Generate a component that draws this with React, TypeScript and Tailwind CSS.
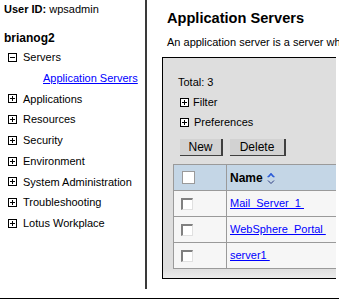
import React from "react";

const Box = ({ minus }: { minus?: boolean }) => (
  <svg width="9" height="9" viewBox="0 0 9 9" className="shrink-0">
    <rect x="0.5" y="0.5" width="8" height="8" fill="white" stroke="#000" />
    <path d="M2 4.5H7" stroke="#000" />
    {!minus && <path d="M4.5 2V7" stroke="#000" />}
  </svg>
);

const Check = () => (
  <div className="w-[12px] h-[12px] bg-white border-t-2 border-l-2 border-[#808080] border-r border-b border-r-[#e0e0e0] border-b-[#e0e0e0]" />
);

const SortIcon = () => (
  <svg width="8" height="14" viewBox="0 0 8 14" className="shrink-0">
    <path d="M0.5 6 L4 2 L7.5 6 L6 6 L4 3.8 L2 6 Z" fill="#2a5ad8" stroke="#2a5ad8" strokeWidth="0.6" />
    <path d="M1 9.5 L4 12.5 L7 9.5" fill="none" stroke="#2b3a80" strokeWidth="1" />
  </svg>
);

const navItems = [
  "Applications",
  "Resources",
  "Security",
  "Environment",
  "System Administration",
  "Troubleshooting",
  "Lotus Workplace",
];

const rows = ["Mail_Server_1", "WebSphere_Portal", "server1"];

export default function App() {
  return (
    <div className="w-[339px] h-[299px] bg-white overflow-hidden border-b border-black font-['Liberation_Sans',Arial,sans-serif] text-black">
      <div className="flex h-[290px]">
        {/* Left nav */}
        <div className="w-[145px] shrink-0 text-[11px]">
          <div className="pl-[4px] leading-[18px] whitespace-nowrap">
            <span className="font-bold">User ID:</span> wpsadmin
          </div>
          <div className="pl-[4px] mt-[11px] leading-[18px] font-bold text-[12px]">brianog2</div>
          <div className="flex items-center h-[20.75px] pl-[8px] gap-[6px]">
            <Box minus />
            <span>Servers</span>
          </div>
          <div className="flex items-center h-[20.75px] pl-[43px]">
            <span className="text-[#0000ff] underline">Application Servers</span>
          </div>
          {navItems.map((n) => (
            <div key={n} className="flex items-center h-[20.75px] pl-[8px] gap-[6px] whitespace-nowrap">
              <Box />
              <span>{n}</span>
            </div>
          ))}
        </div>
        {/* Divider */}
        <div className="w-[2px] shrink-0 h-[289px] bg-[#3a3a3a]" />
        {/* Right content */}
        <div className="flex-1 min-w-0 overflow-hidden">
          <div className="pl-[20px] pt-[9px] text-[14.6px] font-bold leading-[18px] whitespace-nowrap">
            Application Servers
          </div>
          <div className="pl-[20px] mt-[8px] text-[11px] leading-[14px] whitespace-nowrap overflow-hidden">
            An application server is a server which provides services required to run enterprise applications.
          </div>
          <div className="ml-[15px] mt-[8px] w-[174px] overflow-hidden h-[222px] border-t border-l border-b border-black bg-[#dedede] flex flex-col">
            <div className="pl-[15px] pt-[17px] text-[11px] leading-[14px]">Total: 3</div>
            <div className="mt-[3.5px] flex items-center h-[20px] pl-[17px] gap-[4px] text-[11px]">
              <Box />
              <span>Filter</span>
            </div>
            <div className="flex items-center h-[20px] pl-[17px] gap-[5px] text-[11px]">
              <Box />
              <span>Preferences</span>
            </div>
            <div className="mt-[6.5px] flex pl-[17px] gap-[7px]">
              <div className="w-[43px] h-[17px] bg-[#d2d2d2] border-r-2 border-b border-[#404040] flex items-center justify-center text-[12px] leading-none">
                New
              </div>
              <div className="w-[56px] h-[17px] bg-[#d2d2d2] border-r-2 border-b border-[#404040] flex items-center justify-center text-[12px] leading-none">
                Delete
              </div>
            </div>
            <div className="mt-[8px] ml-[10px] w-[300px] border-l border-t border-[#9a9a9a] text-[11px]">
              <div className="flex h-[26px] bg-[#c4d6e6] border-b border-[#9a9a9a]">
                <div className="w-[53px] shrink-0 border-r border-[#9a9a9a] flex items-center pl-[8px]">
                  <div className="w-[13px] h-[13px] bg-white border border-[#9a9a9a]" />
                </div>
                <div className="flex items-center pl-[3px] gap-[4px]">
                  <span className="font-bold text-[12px]">Name</span>
                  <SortIcon />
                </div>
              </div>
              {rows.map((r) => (
                <div key={r} className="flex h-[26px] bg-[#f6f6f6] border-b border-[#9a9a9a]">
                  <div className="w-[53px] shrink-0 border-r border-[#9a9a9a] flex items-center pl-[7px]">
                    <Check />
                  </div>
                  <div className="flex items-center pl-[3px]">
                    <span className="text-[#0000ff] underline whitespace-pre">{r + " "}</span>
                  </div>
                </div>
              ))}
            </div>
            <div className="flex-1 bg-gradient-to-b from-[#dedede] to-[#ececec]" />
          </div>
        </div>
      </div>
    </div>
  );
}
